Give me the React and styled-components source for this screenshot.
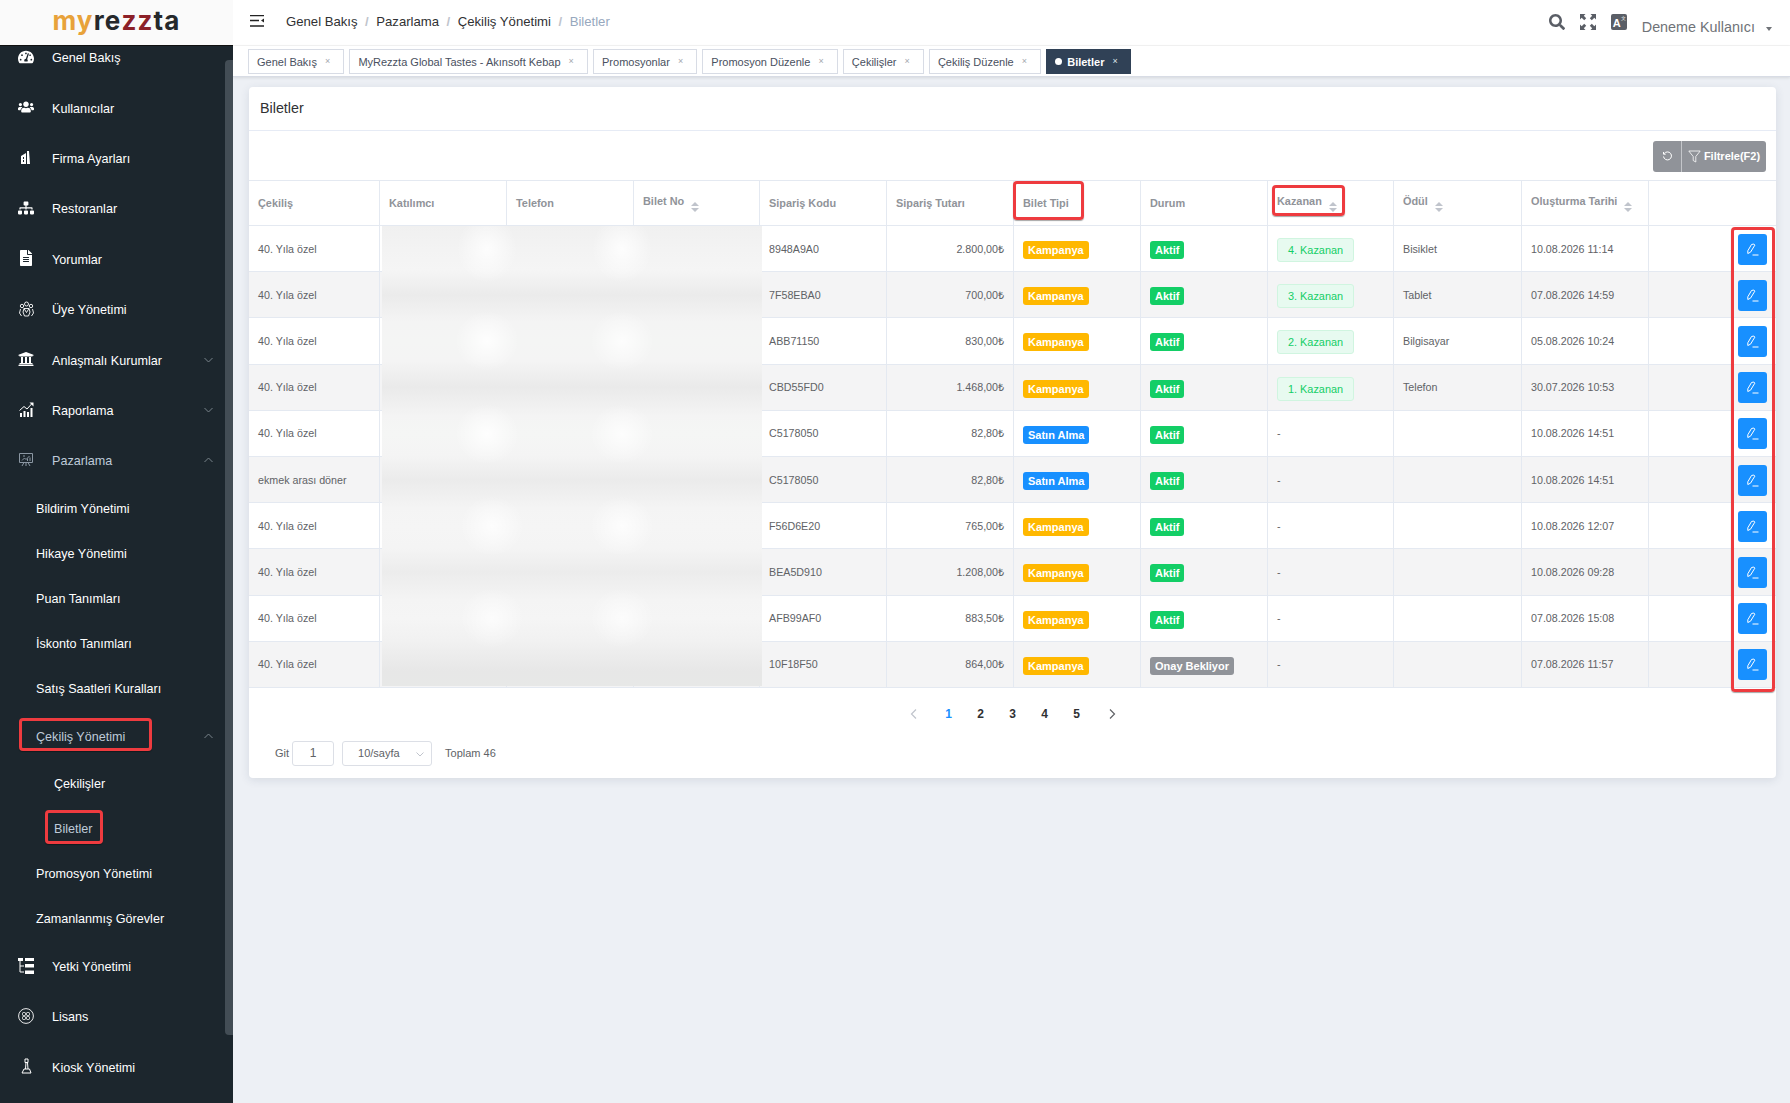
import React from 'react';
import styled, { createGlobalStyle } from 'styled-components';
import { FaTachometerAlt, FaUsers, FaSitemap, FaFileAlt, FaUniversity, FaSearch } from 'react-icons/fa';

const GlobalStyle = createGlobalStyle`
	html, body {
		margin: 0;
		height: 100%;
		background: #edf0f5;
		font-family: 'Liberation Sans', Arial, sans-serif;
	}
	* {
		box-sizing: border-box;
	}
`;

const Page = styled.div`
	display: flex;
	height: 1103px;
	overflow: hidden;
`;

const Sidebar = styled.aside`
	position: relative;
	flex: 0 0 233px;
	display: flex;
	flex-direction: column;
	background: #1c262d;
	overflow: hidden;
`;

const LogoBar = styled.div`
	position: relative;
	z-index: 2;
	flex: 0 0 46px;
	display: flex;
	justify-content: center;
	padding: 2px 0 0 0;
	background: #fafafa;
	border-bottom: 1px solid #111;
	font-family: Inter, 'Liberation Sans', sans-serif;
	font-size: 26px;
	font-weight: 700;
	line-height: 38px;
	letter-spacing: 1.15px;
	color: #25282b;
`;

const LogoPart = styled.span`
	color: ${(p) => p.$color};
`;

const Menu = styled.nav`
	margin-top: -13px;
`;

const Item = styled.div`
	position: relative;
	display: flex;
	align-items: center;
	height: ${(p) => (p.$short ? '45px' : '50.4px')};
	padding-left: ${(p) => p.$indent}px;
	font-size: 12.6px;
	color: ${(p) => (p.$active ? '#bfcbd9' : '#fff')};
`;

const ItemIcon = styled.span`
	display: flex;
	justify-content: center;
	flex: 0 0 16px;
	margin-right: 18px;
	margin-top: -3px;
	font-size: 16px;
	color: ${(p) => (p.$dim ? '#8b97a3' : '#fff')};
`;

const Chevron = styled.svg`
	position: absolute;
	right: 20px;
	top: 50%;
	margin-top: -4px;
	width: 9px;
	height: 6px;
	fill: none;
	stroke: #79838b;
	stroke-width: 1;
	transform: ${(p) => (p.$up ? 'rotate(180deg)' : 'none')};
`;

const Mark = styled.span`
	position: absolute;
	left: ${(p) => p.$left}px;
	top: ${(p) => p.$top}px;
	width: ${(p) => p.$width}px;
	height: ${(p) => p.$height}px;
	border: 3px solid #ee3b3f;
	border-radius: 4px;
	box-shadow: 0 1px 1px rgba(0, 0, 0, 0.35);
	pointer-events: none;
	z-index: 3;
`;

const Scrollbar = styled.div`
	position: absolute;
	top: 60px;
	right: 0;
	width: 8px;
	height: 975px;
	background: #434d55;
	border-radius: 4px 0 0 4px;
`;

const Main = styled.main`
	flex: 1;
	min-width: 0;
	display: flex;
	flex-direction: column;
`;

const TopBar = styled.header`
	flex: 0 0 46px;
	display: flex;
	align-items: flex-start;
	padding: 0 18px 0 17px;
	background: #fff;
	border-bottom: 1px solid #f4f4f4;
`;

const Hamburger = styled.svg`
	width: 14px;
	height: 12px;
	margin: 15px 22px 0 0;
`;

const Breadcrumb = styled.div`
	flex: 1;
	display: flex;
	align-items: center;
	height: 42px;
	font-size: 13.15px;
	color: #303133;
`;

const Slash = styled.span`
	margin: 0 7.5px;
	font-weight: 700;
	color: #c0c4cc;
`;

const Current = styled.span`
	color: #97a8be;
`;

const ToolIcons = styled.div`
	display: flex;
	align-items: center;
	gap: 15px;
	height: 16px;
	margin-top: 14px;
	color: #5a5e66;
`;

const LangBox = styled.span`
	position: relative;
	display: block;
	width: 16px;
	height: 16px;
	padding: 3px 0 0 2px;
	background: #5a5e66;
	border-radius: 2px;
	color: #fff;
	font-size: 11px;
	font-weight: 700;
	line-height: 13px;
`;

const LangSup = styled.sup`
	position: absolute;
	top: 1px;
	right: 1px;
	font-size: 5px;
	line-height: 6px;
	font-weight: 400;
`;

const UserName = styled.div`
	display: flex;
	align-items: center;
	margin: 18px 0 0 15px;
	font-size: 14.35px;
	line-height: 18px;
	color: #707378;
`;

const Caret = styled.span`
	width: 0;
	height: 0;
	margin: 3px 0 0 11px;
	border: 3.5px solid transparent;
	border-top: 4px solid #707378;
	border-bottom: 0;
`;

const TagsBar = styled.div`
	flex: 0 0 31px;
	display: flex;
	gap: 5.2px;
	padding: 3px 0 0 15px;
	background: #fff;
	border-bottom: 1px solid #d8dce5;
	box-shadow: 0 1px 3px rgba(0, 0, 0, 0.1);
`;

const Tag = styled.div`
	display: flex;
	align-items: center;
	height: 25px;
	padding: 0 ${(p) => (p.$active ? '12px' : '13px')} 0 8px;
	border: 1px solid ${(p) => (p.$active ? '#304156' : '#d8dce5')};
	background: ${(p) => (p.$active ? '#304156' : '#fff')};
	color: ${(p) => (p.$active ? '#fff' : '#495060')};
	font-size: 11px;
	font-weight: ${(p) => (p.$active ? 700 : 400)};
	white-space: nowrap;
`;

const TagDot = styled.span`
	width: 7px;
	height: 7px;
	margin-right: 5px;
	border-radius: 50%;
	background: #fff;
`;

const TagClose = styled.span`
	margin-left: 8px;
	font-size: 9px;
	line-height: 9px;
	font-weight: 400;
	color: ${(p) => (p.$active ? '#dfe3ea' : '#a3a7ae')};
`;

const Card = styled.section`
	margin: 10px 14px 0 16px;
	background: #fff;
	border-radius: 4px;
	box-shadow: 0 2px 10px rgba(40, 60, 90, 0.12);
`;

const CardTitle = styled.h2`
	margin: 0;
	height: 44px;
	padding: 0 11px;
	border-bottom: 1px solid #e6ebf5;
	font-size: 14.3px;
	font-weight: 400;
	line-height: 42px;
	color: #303133;
`;

const Toolbar = styled.div`
	display: flex;
	justify-content: flex-end;
	align-items: center;
	height: 49px;
	padding: 0 10px 0 0;
`;

const ButtonGroup = styled.div`
	display: flex;
	height: 31px;
	margin-top: 1px;
	border-radius: 3px;
	overflow: hidden;
	background: #909399;
	color: #fff;
	font-size: 11px;
	font-weight: 700;
`;

const GroupButton = styled.div`
	display: flex;
	align-items: center;
	justify-content: center;
	gap: 3px;
	width: ${(p) => p.$width}px;
	border-left: ${(p) => (p.$divided ? '1px solid #c4c6ca' : '0')};
`;

const TableWrap = styled.div`
	position: relative;
`;

const Table = styled.table`
	width: 100%;
	table-layout: fixed;
	border-collapse: separate;
	border-spacing: 0;
	border-top: 1px solid #e4e9f1;
`;

const HeadCell = styled.th`
	position: relative;
	height: 45px;
	padding: 0 9px;
	border-right: 1px solid #e4e9f1;
	border-bottom: 1px solid #e4e9f1;
	font-size: 10.9px;
	font-weight: 700;
	text-align: left;
	color: #909399;
	white-space: nowrap;
	&:last-child {
		border-right: 0;
	}
`;

const SortCaret = styled.span`
	display: inline-flex;
	flex-direction: column;
	gap: 2px;
	margin-left: 7px;
	vertical-align: -1px;
	&::before,
	&::after {
		content: '';
		width: 0;
		height: 0;
		border-left: 4px solid transparent;
		border-right: 4px solid transparent;
	}
	&::before {
		border-bottom: 4px solid #c0c4cc;
	}
	&::after {
		border-top: 4px solid #c0c4cc;
	}
`;

const Row = styled.tr`
	height: 46.2px;
	background: ${(p) => (p.$striped ? '#f4f4f5' : '#fff')};
`;

const Cell = styled.td`
	padding: 0 9px;
	border-right: 1px solid #e4e9f1;
	border-bottom: 1px solid #e4e9f1;
	font-size: 10.7px;
	color: #606266;
	text-align: ${(p) => (p.$right ? 'right' : 'left')};
	white-space: nowrap;
	&:last-child {
		border-right: 0;
	}
`;

const Badge = styled.span`
	display: inline-block;
	margin-top: 3px;
	padding: 0 5px;
	height: 18px;
	border-radius: 3px;
	background: ${(p) => p.$color};
	color: #fff;
	font-size: 11px;
	font-weight: 700;
	line-height: 18px;
`;

const WinnerTag = styled.span`
	display: inline-block;
	margin-top: 3px;
	padding: 0 10px;
	height: 24px;
	border: 1px solid #d0f5e0;
	border-radius: 3px;
	background: #e7faf0;
	color: #13ce66;
	font-size: 10.9px;
	line-height: 22px;
`;

const EditButton = styled.div`
	display: flex;
	align-items: center;
	justify-content: center;
	width: 29px;
	height: 31px;
	margin: 1px 0 0 auto;
	border-radius: 3px;
	background: #1890ff;
`;

const BlurPatch = styled.div`
	position: absolute;
	left: 133px;
	top: 46px;
	width: 380px;
	height: 460px;
	background:
		radial-gradient(ellipse 30px 34px at 105px 23px, rgba(255, 255, 255, 0.85), transparent),
		radial-gradient(ellipse 30px 34px at 240px 23px, rgba(255, 255, 255, 0.85), transparent),
		radial-gradient(ellipse 32px 30px at 105px 115px, rgba(255, 255, 255, 0.9), transparent),
		radial-gradient(ellipse 32px 30px at 240px 115px, rgba(255, 255, 255, 0.8), transparent),
		radial-gradient(ellipse 32px 30px at 105px 208px, rgba(255, 255, 255, 0.9), transparent),
		radial-gradient(ellipse 32px 30px at 240px 208px, rgba(255, 255, 255, 0.8), transparent),
		radial-gradient(ellipse 32px 30px at 110px 300px, rgba(255, 255, 255, 0.8), transparent),
		radial-gradient(ellipse 32px 30px at 240px 300px, rgba(255, 255, 255, 0.8), transparent),
		radial-gradient(ellipse 32px 30px at 110px 392px, rgba(255, 255, 255, 0.7), transparent),
		radial-gradient(ellipse 32px 30px at 240px 392px, rgba(255, 255, 255, 0.7), transparent),
		linear-gradient(
			180deg,
			#f0f0f0 0,
			#f3f3f3 24px,
			#f5f5f5 44px,
			#ebebeb 69px,
			#f4f4f4 96px,
			#f4f5f4 116px,
			#f4f4f4 135px,
			#eaeaea 161px,
			#f4f4f4 190px,
			#f5f6f5 208px,
			#f4f4f4 230px,
			#ebebeb 254px,
			#f4f4f4 282px,
			#f5f5f5 300px,
			#f4f4f4 322px,
			#ececec 346px,
			#f4f4f4 374px,
			#f5f5f5 392px,
			#f1f1f1 415px,
			#e7e7e7 445px,
			#e7e8e7 460px
		);
`;

const Pager = styled.div`
	display: flex;
	justify-content: center;
	align-items: center;
	height: 26px;
	margin-top: 13px;
	font-size: 12px;
	font-weight: 700;
	color: #303133;
`;

const PageNum = styled.span`
	width: 32px;
	text-align: center;
	color: ${(p) => (p.$active ? '#1890ff' : '#303133')};
`;

const PageArrow = styled.svg`
	width: 8px;
	height: 10px;
	margin: 0 ${(p) => (p.$prev ? '15px 0 8px' : '8px 0 15px')};
	fill: none;
	stroke: ${(p) => (p.$prev ? '#c0c4cc' : '#606266')};
	stroke-width: 1.2;
`;

const Footer = styled.div`
	display: flex;
	align-items: center;
	height: 25px;
	margin-top: 14px;
	padding-left: 26px;
	padding-bottom: 0;
	margin-bottom: 12px;
	font-size: 11px;
	color: #606266;
`;

const GoInput = styled.div`
	width: 42px;
	height: 25px;
	margin: 0 8px 0 3px;
	border: 1px solid #dcdfe6;
	border-radius: 3px;
	text-align: center;
	line-height: 23px;
	font-size: 12px;
`;

const PageSize = styled.div`
	position: relative;
	width: 90px;
	height: 25px;
	margin-right: 13px;
	padding-left: 15px;
	border: 1px solid #dcdfe6;
	border-radius: 3px;
	line-height: 23px;
`;

const SizeChevron = styled.svg`
	position: absolute;
	right: 7px;
	top: 10px;
	width: 8px;
	height: 5px;
	fill: none;
	stroke: #c0c4cc;
`;

// icons not available in the packages
const BuildingIcon = () => (
	<svg width="12" height="15" viewBox="0 0 12 15" fill="#fff">
		<path d="M1 6 6 3v11H1zM7 1h2l1 13H7z" />
		<rect x="3" y="7" width="1" height="2" fill="#1c262d" />
		<rect x="3" y="10" width="1" height="2" fill="#1c262d" />
	</svg>
);

const GroupIcon = () => (
	<svg width="15" height="16" viewBox="0 0 15 16" fill="none" stroke="#fff" strokeWidth="0.9">
		<circle cx="7.5" cy="3" r="2" />
		<circle cx="3" cy="5" r="1.7" />
		<circle cx="12" cy="5" r="1.7" />
		<path d="M5 7.5h5L11 11 9.5 15h-4L4 11zM1.500 8 .5 12l2 3M13.500 8l1 4-2 3M5 7.500l2.500 4 2.500-4" />
	</svg>
);

const ChartIcon = () => (
	<svg width="15" height="15" viewBox="0 0 15 15" fill="#fff">
		<rect x="1" y="11" width="2" height="4" />
		<rect x="4.500" y="9" width="2" height="6" />
		<rect x="8" y="10" width="2" height="5" />
		<rect x="11.500" y="6" width="2" height="9" />
		<path d="M0.500 8.500 5 4.500l3 2.500 5-5.500" fill="none" stroke="#fff" strokeWidth="1" />
		<path d="M10.500 0.500h4v4z" />
	</svg>
);

const BoardIcon = () => (
	<svg width="14" height="14" viewBox="0 0 14 14" fill="none" stroke="#8b97a3" strokeWidth="1">
		<path d="M0.500 0.500h13v9h-13zM3 13l2-3.500M11 13 9 9.500M7 9.500V13" />
		<path d="M3 7.500 5.500 5 7 6.500 10.500 3M4 3h2" />
		<path d="M8.500 8V5.500M11 8V4.500" />
	</svg>
);

const TreeIcon = () => (
	<svg width="16" height="16" viewBox="0 0 16 16" fill="#fff">
		<rect x="0" y="0" width="5" height="3" />
		<rect x="7" y="0" width="9" height="3" />
		<rect x="7" y="6" width="9" height="3.500" />
		<rect x="7" y="12.500" width="9" height="3.500" />
		<path d="M2 3v11h4M2 8h4" fill="none" stroke="#fff" strokeWidth="1" />
	</svg>
);

const LicenseIcon = () => (
	<svg width="16" height="16" viewBox="0 0 16 16" fill="none" stroke="#fff" strokeWidth="0.9">
		<circle cx="8" cy="8" r="7.400" />
		<rect x="4.500" y="4.500" width="3" height="3" rx="1" />
		<rect x="8.500" y="4.500" width="3" height="3" rx="1" />
		<rect x="4.500" y="8.500" width="3" height="3" rx="1" />
		<rect x="8.500" y="8.500" width="3" height="3" rx="1" />
	</svg>
);

const KioskIcon = () => (
	<svg width="11" height="16" viewBox="0 0 11 16" fill="none" stroke="#fff" strokeWidth="1">
		<path d="M4 1h3v3.500H4zM5 4.500 4.500 11M6.500 4.500 7 11M3 11h5.500l1.500 4H1z" />
	</svg>
);

const ExpandIcon = () => (
	<svg width="16" height="16" viewBox="0 0 16 16" fill="#5a5e66">
		<path d="M0 0h5.500L3.800 1.700 6.200 4.200 4.200 6.200 1.700 3.800 0 5.500zM16 0v5.500l-1.700-1.700-2.500 2.400-2-2 2.400-2.500L10.500 0zM0 16v-5.500l1.700 1.700 2.500-2.400 2 2-2.400 2.500L5.500 16zM16 16h-5.500l1.700-1.700-2.400-2.500 2-2 2.500 2.400 1.700-1.700z" />
	</svg>
);

const PenIcon = () => (
	<svg width="13" height="13" viewBox="0 0 13 13" fill="none" stroke="#fff" strokeWidth="1">
		<path d="M5.500 1.500 7.800 1 8.800 2.200 4.500 9.200 1.800 10.500 1.800 7.800z" />
		<path d="M6.500 12h6" />
	</svg>
);

const chevronPath = <path d="M.5.500 4.500 4.500 8.500.5" />;

const menu = [
	{ label: 'Genel Bakış', icon: <FaTachometerAlt /> },
	{ label: 'Kullanıcılar', icon: <FaUsers /> },
	{ label: 'Firma Ayarları', icon: <BuildingIcon /> },
	{ label: 'Restoranlar', icon: <FaSitemap /> },
	{ label: 'Yorumlar', icon: <FaFileAlt /> },
	{ label: 'Üye Yönetimi', icon: <GroupIcon /> },
	{ label: 'Anlaşmalı Kurumlar', icon: <FaUniversity />, chevron: 'down' },
	{ label: 'Raporlama', icon: <ChartIcon />, chevron: 'down' },
	{ label: 'Pazarlama', icon: <BoardIcon />, chevron: 'up', active: true, dim: true },
	{ label: 'Bildirim Yönetimi', sub: 1 },
	{ label: 'Hikaye Yönetimi', sub: 1 },
	{ label: 'Puan Tanımları', sub: 1 },
	{ label: 'İskonto Tanımları', sub: 1 },
	{ label: 'Satış Saatleri Kuralları', sub: 1 },
	{ label: 'Çekiliş Yönetimi', sub: 1, tall: true, chevron: 'up', active: true, mark: { $left: 19, $top: 6, $width: 133, $height: 33 } },
	{ label: 'Çekilişler', sub: 2 },
	{ label: 'Biletler', sub: 2, active: true, mark: { $left: 45, $top: 3, $width: 58, $height: 34 } },
	{ label: 'Promosyon Yönetimi', sub: 1 },
	{ label: 'Zamanlanmış Görevler', sub: 1 },
	{ label: 'Yetki Yönetimi', icon: <TreeIcon /> },
	{ label: 'Lisans', icon: <LicenseIcon /> },
	{ label: 'Kiosk Yönetimi', icon: <KioskIcon /> },
];

const tags = [
	'Genel Bakış',
	'MyRezzta Global Tastes - Akınsoft Kebap',
	'Promosyonlar',
	'Promosyon Düzenle',
	'Çekilişler',
	'Çekiliş Düzenle',
];

const columns = [
	{ label: 'Çekiliş', width: 131 },
	{ label: 'Katılımcı', width: 127 },
	{ label: 'Telefon', width: 127 },
	{ label: 'Bilet No', width: 126, sort: true },
	{ label: 'Sipariş Kodu', width: 127 },
	{ label: 'Sipariş Tutarı', width: 127 },
	{ label: 'Bilet Tipi', width: 127, mark: { $left: -1, $top: 0, $width: 71, $height: 39 } },
	{ label: 'Durum', width: 127 },
	{ label: 'Kazanan', width: 126, sort: true, mark: { $left: 4, $top: 4, $width: 73, $height: 31 } },
	{ label: 'Ödül', width: 128, sort: true },
	{ label: 'Oluşturma Tarihi', width: 127, sort: true },
	{ label: '', width: 127 },
];

const rows = [
	['40. Yıla özel', '8948A9A0', '2.800,00₺', 'Kampanya', 'Aktif', '4. Kazanan', 'Bisiklet', '10.08.2026 11:14'],
	['40. Yıla özel', '7F58EBA0', '700,00₺', 'Kampanya', 'Aktif', '3. Kazanan', 'Tablet', '07.08.2026 14:59'],
	['40. Yıla özel', 'ABB71150', '830,00₺', 'Kampanya', 'Aktif', '2. Kazanan', 'Bilgisayar', '05.08.2026 10:24'],
	['40. Yıla özel', 'CBD55FD0', '1.468,00₺', 'Kampanya', 'Aktif', '1. Kazanan', 'Telefon', '30.07.2026 10:53'],
	['40. Yıla özel', 'C5178050', '82,80₺', 'Satın Alma', 'Aktif', '', '', '10.08.2026 14:51'],
	['ekmek arası döner', 'C5178050', '82,80₺', 'Satın Alma', 'Aktif', '', '', '10.08.2026 14:51'],
	['40. Yıla özel', 'F56D6E20', '765,00₺', 'Kampanya', 'Aktif', '', '', '10.08.2026 12:07'],
	['40. Yıla özel', 'BEA5D910', '1.208,00₺', 'Kampanya', 'Aktif', '', '', '10.08.2026 09:28'],
	['40. Yıla özel', 'AFB99AF0', '883,50₺', 'Kampanya', 'Aktif', '', '', '07.08.2026 15:08'],
	['40. Yıla özel', '10F18F50', '864,00₺', 'Kampanya', 'Onay Bekliyor', '', '', '07.08.2026 11:57'],
];

const typeColors = { Kampanya: '#ffb800', 'Satın Alma': '#1890ff' };
const statusColors = { Aktif: '#13ce66', 'Onay Bekliyor': '#909399' };
const indents = { 0: 18, 1: 36, 2: 54 };

const App = () => {
	return (
		<Page>
			<GlobalStyle />
			<Sidebar>
				<LogoBar>
					<LogoPart $color="#e8a23a">my</LogoPart>
					<LogoPart $color="#25282b">re</LogoPart>
					<LogoPart $color="#8c2028">zz</LogoPart>
					<LogoPart $color="#25282b">ta</LogoPart>
				</LogoBar>
				<Menu>
					{menu.map((item) => (
						<Item
							key={item.label}
							$short={item.sub && !item.tall}
							$indent={indents[item.sub || 0]}
							$active={item.active}
						>
							{item.icon && <ItemIcon $dim={item.dim}>{item.icon}</ItemIcon>}
							{item.label}
							{item.chevron && (
								<Chevron viewBox="0 0 9 5" $up={item.chevron === 'up'}>
									{chevronPath}
								</Chevron>
							)}
							{item.mark && <Mark {...item.mark} />}
						</Item>
					))}
				</Menu>
				<Scrollbar />
			</Sidebar>
			<Main>
				<TopBar>
					<Hamburger viewBox="0 0 14 12">
						<path d="M0 .5h14M0 5.500h9M0 11h14" stroke="#222" strokeWidth="1.4" />
						<path d="M14 3.500v4l-3-2z" fill="#222" />
					</Hamburger>
					<Breadcrumb>
						Genel Bakış
						<Slash>/</Slash>
						Pazarlama
						<Slash>/</Slash>
						Çekiliş Yönetimi
						<Slash>/</Slash>
						<Current>Biletler</Current>
					</Breadcrumb>
					<ToolIcons>
						<FaSearch size="16px" />
						<ExpandIcon />
						<LangBox>
							A<LangSup>文</LangSup>
						</LangBox>
					</ToolIcons>
					<UserName>
						Deneme Kullanıcı
						<Caret />
					</UserName>
				</TopBar>
				<TagsBar>
					{tags.map((tag) => (
						<Tag key={tag}>
							{tag}
							<TagClose>×</TagClose>
						</Tag>
					))}
					<Tag $active>
						<TagDot />
						Biletler
						<TagClose $active>×</TagClose>
					</Tag>
				</TagsBar>
				<Card>
					<CardTitle>Biletler</CardTitle>
					<Toolbar>
						<ButtonGroup>
							<GroupButton $width={28}>
								<svg width="11" height="11" viewBox="0 0 11 11" fill="none" stroke="#fff" strokeWidth="1">
									<path d="M2.200 2.600A4 4 0 1 1 1.500 5.500" />
									<path d="M1.500 1v2.200h2.200" />
								</svg>
							</GroupButton>
							<GroupButton $width={85} $divided>
								<svg width="13" height="13" viewBox="0 0 13 13" fill="none" stroke="#fff" strokeWidth="0.8">
									<path d="M.8 1h11.400L7.800 6.500V12L5.200 10.500v-4z" />
								</svg>
								Filtrele(F2)
							</GroupButton>
						</ButtonGroup>
					</Toolbar>
					<TableWrap>
						<Table>
							<colgroup>
								{columns.map((col, i) => (
									<col key={i} width={col.width} />
								))}
							</colgroup>
							<thead>
								<tr>
									{columns.map((col, i) => (
										<HeadCell key={i}>
											{col.label}
											{col.sort && <SortCaret />}
											{col.mark && <Mark {...col.mark} />}
										</HeadCell>
									))}
								</tr>
							</thead>
							<tbody>
								{rows.map((row, i) => (
									<Row key={i} $striped={i % 2 === 1}>
										<Cell>{row[0]}</Cell>
										<Cell />
										<Cell />
										<Cell />
										<Cell>{row[1]}</Cell>
										<Cell $right>{row[2]}</Cell>
										<Cell>
											<Badge $color={typeColors[row[3]]}>{row[3]}</Badge>
										</Cell>
										<Cell>
											<Badge $color={statusColors[row[4]]}>{row[4]}</Badge>
										</Cell>
										<Cell>{row[5] ? <WinnerTag>{row[5]}</WinnerTag> : '-'}</Cell>
										<Cell>{row[6]}</Cell>
										<Cell>{row[7]}</Cell>
										<Cell>
											<EditButton>
												<PenIcon />
											</EditButton>
										</Cell>
									</Row>
								))}
							</tbody>
						</Table>
						<BlurPatch />
						<Mark $left={1482} $top={47} $width={44} $height={465} />
					</TableWrap>
					<Pager>
						<PageArrow viewBox="0 0 8 10" $prev>
							<path d="M6 .5 1.500 5 6 9.500" />
						</PageArrow>
						<PageNum $active>1</PageNum>
						<PageNum>2</PageNum>
						<PageNum>3</PageNum>
						<PageNum>4</PageNum>
						<PageNum>5</PageNum>
						<PageArrow viewBox="0 0 8 10">
							<path d="M2 .5 6.500 5 2 9.500" />
						</PageArrow>
					</Pager>
					<Footer>
						Git
						<GoInput>1</GoInput>
						<PageSize>
							10/sayfa
							<SizeChevron viewBox="0 0 8 5">
								<path d="M.5.500 4 4 7.500.5" />
							</SizeChevron>
						</PageSize>
						Toplam 46
					</Footer>
				</Card>
			</Main>
		</Page>
	);
};

export default App;
